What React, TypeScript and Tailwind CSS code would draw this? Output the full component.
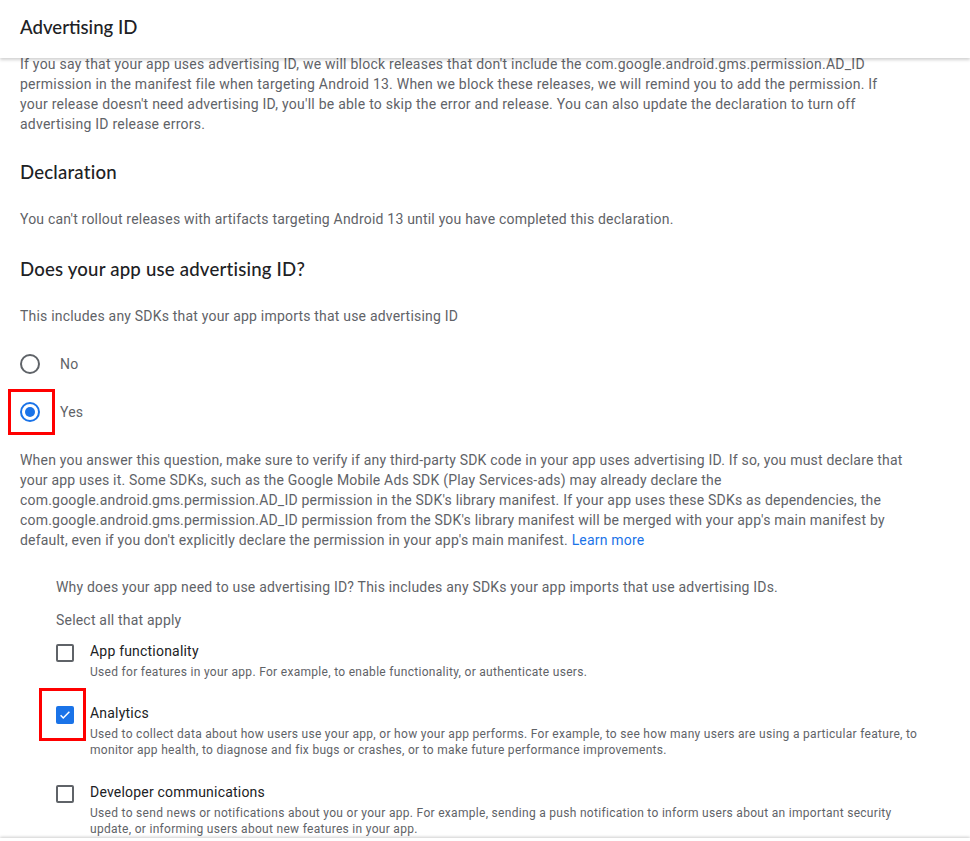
import React from "react";

const body = { fontFamily: "Roboto, 'Liberation Sans', sans-serif" } as React.CSSProperties;

function Radio({ checked }: { checked?: boolean }) {
  return (
    <span
      className={
        "flex h-[20px] w-[20px] shrink-0 items-center justify-center rounded-full border-2 " +
        (checked ? "border-[#1a73e8]" : "border-[#5f6368]")
      }
    >
      {checked && <span className="h-[10px] w-[10px] rounded-full bg-[#1a73e8]" />}
    </span>
  );
}

function Checkbox({ checked }: { checked?: boolean }) {
  return checked ? (
    <span className="flex h-[18px] w-[18px] items-center justify-center rounded-[2px] bg-[#1a73e8]">
      <svg width="14" height="14" viewBox="0 0 24 24">
        <path d="M4.5 12.5l4.5 4.5L19.5 6.5" fill="none" stroke="#fff" strokeWidth="2.6" />
      </svg>
    </span>
  ) : (
    <span className="block h-[18px] w-[18px] rounded-[2px] border-2 border-[#5f6368]" />
  );
}

function Item({
  label,
  desc,
  checked,
  highlight,
  mt,
}: {
  label: string;
  desc: string;
  checked?: boolean;
  highlight?: boolean;
  mt: string;
}) {
  return (
    <div className={"flex " + mt}>
      <div className="relative mt-[3px] w-[34px] shrink-0">
        <Checkbox checked={checked} />
        {highlight && (
          <span className="absolute left-[-17px] top-[-18px] h-[53px] w-[47px] border-[3px] border-[#ff0000]" />
        )}
      </div>
      <div className="flex-1">
        <div className="text-[14px] leading-[20px] tracking-[0.2px] text-[#202124]">{label}</div>
        <div className="mt-[3px] text-[12px] leading-[16px] tracking-[0.3px] text-[#5f6368]">{desc}</div>
      </div>
    </div>
  );
}

export default function App() {
  const heading = "text-[18.6px] leading-[24px] font-medium text-[#202124] font-['Lato','Open_Sans',sans-serif]";
  return (
    <div className="flex h-[841px] w-[970px] flex-col overflow-hidden bg-white" style={body}>
      <div className="relative z-10 h-[58px] shrink-0 bg-white pl-[20px] pt-[15px] shadow-[0_2px_3px_rgba(0,0,0,0.18)]">
        <h1 className={heading}>Advertising ID</h1>
      </div>
      <div className="-mt-[4px] min-h-0 flex-1 overflow-hidden pl-[20px]">
        <div className="w-[884px] text-[14px] leading-[20px] tracking-[0.2px] text-[#5f6368]">
          <p className="tracking-[0.24px]">
            If you say that your app uses advertising ID, we will block releases that don't include the
            com.google.android.gms.permission.AD_ID permission in the manifest file when targeting Android 13. When we
            block these releases, we will remind you to add the permission. If your release doesn't need advertising
            ID, you'll be able to skip the error and release. You can also update the declaration to turn off
            advertising ID release errors.
          </p>
          <h2 className={heading + " mt-[26px]"}>Declaration</h2>
          <p className="mt-[25px]">
            You can't rollout releases with artifacts targeting Android 13 until you have completed this declaration.
          </p>
          <h2 className={heading + " mt-[28px]"}>Does your app use advertising ID?</h2>
          <p className="mt-[25px]">This includes any SDKs that your app imports that use advertising ID</p>
          <div className="mt-[14px]">
            <div className="flex h-[48px] items-center">
              <div className="w-[40px]">
                <Radio />
              </div>
              <span>No</span>
            </div>
            <div className="flex h-[48px] items-center">
              <div className="relative w-[40px]">
                <Radio checked />
                <span className="absolute left-[-12px] top-[-13px] h-[46px] w-[47px] border-[3px] border-[#ff0000]" />
              </div>
              <span>Yes</span>
            </div>
          </div>
          <p className="mt-[14px]">
            When you answer this question, make sure to verify if any third-party SDK code in your app uses advertising
            ID. If so, you must declare that your app uses it. Some SDKs, such as the Google Mobile Ads SDK (Play
            Services-ads) may already declare the com.google.android.gms.permission.AD_ID permission in the SDK's
            library manifest. If your app uses these SDKs as dependencies, the
            com.google.android.gms.permission.AD_ID permission from the SDK's library manifest will be merged with
            your app's main manifest by default, even if you don't explicitly declare the permission in your app's
            main manifest. <span className="text-[#1a73e8]">Learn more</span>
          </p>
        </div>
        <div className="ml-[36px] w-[874px] text-[14px] leading-[20px] tracking-[0.2px] text-[#5f6368]">
          <p className="mt-[27px]">
            Why does your app need to use advertising ID? This includes any SDKs your app imports that use advertising
            IDs.
          </p>
          <p className="mt-[13px]">Select all that apply</p>
          <Item
            mt="mt-[11px]"
            label="App functionality"
            desc="Used for features in your app. For example, to enable functionality, or authenticate users."
          />
          <Item
            mt="mt-[23px]"
            checked
            highlight
            label="Analytics"
            desc="Used to collect data about how users use your app, or how your app performs. For example, to see how many users are using a particular feature, to monitor app health, to diagnose and fix bugs or crashes, or to make future performance improvements."
          />
          <Item
            mt="mt-[24px]"
            label="Developer communications"
            desc="Used to send news or notifications about you or your app. For example, sending a push notification to inform users about an important security update, or informing users about new features in your app."
          />
        </div>
      </div>
      <div className="relative z-10 h-[3px] shrink-0 bg-white shadow-[0_-1px_3px_rgba(0,0,0,0.2)]" />
    </div>
  );
}
